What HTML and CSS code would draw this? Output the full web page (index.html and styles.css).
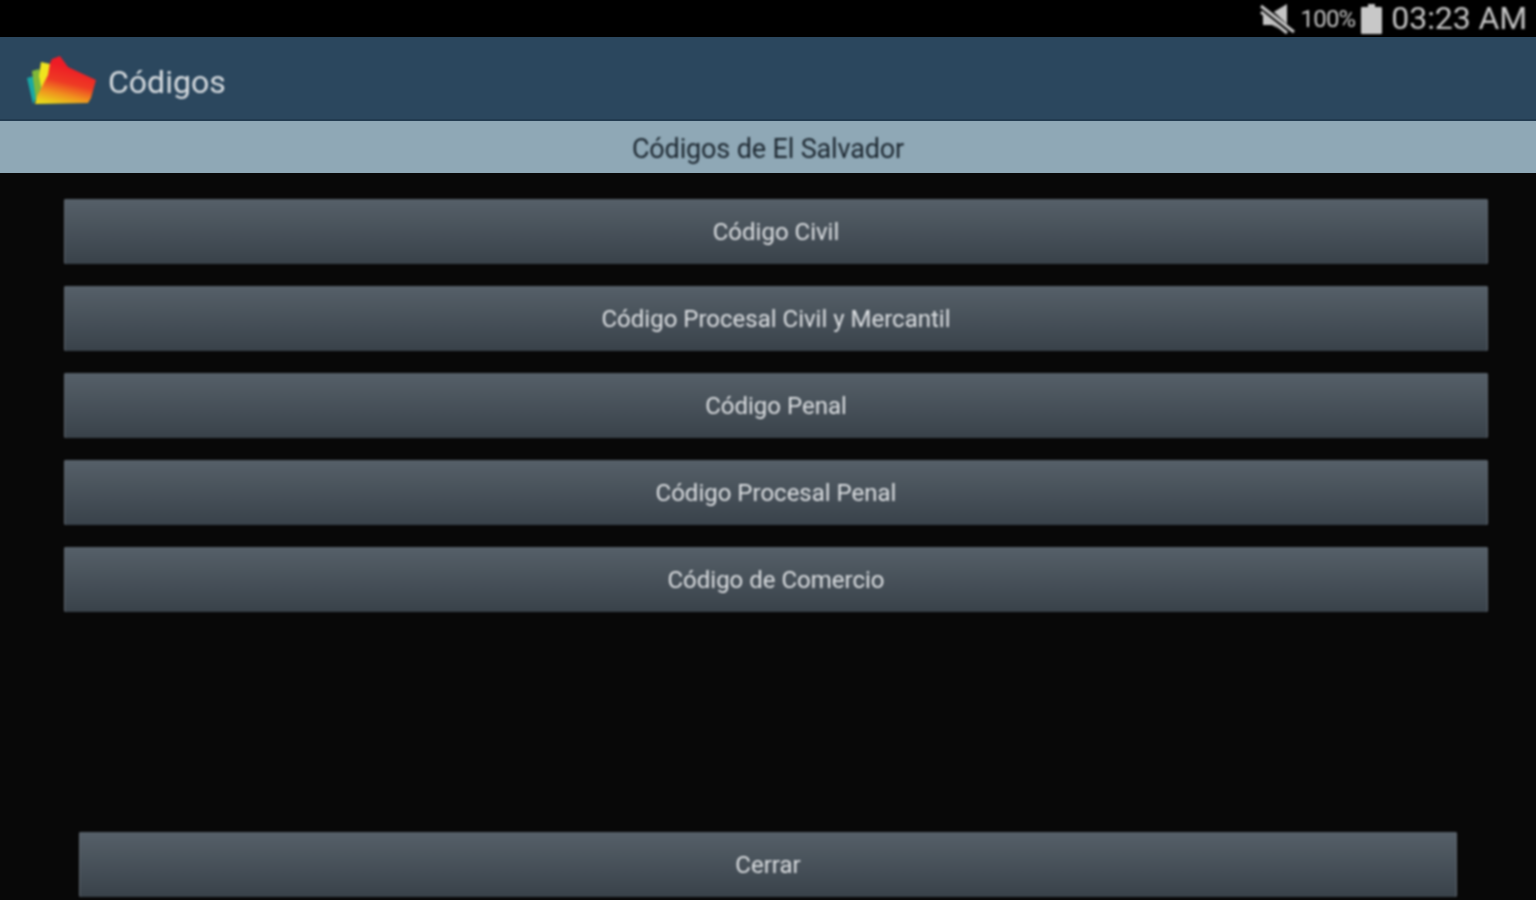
FILE: index.html
```html
<!DOCTYPE html>
<html lang="es">
<head>
    <meta charset="UTF-8">
    <title>Códigos</title>
    <link rel="stylesheet" href="styles.css">
</head>
<body>
<div class="screen">
    <div class="status-bar">
        <svg class="mute-icon soft" width="36" height="34" viewBox="0 0 36 34">
            <path d="M3 11h9L27 2v29L12 23H3z" fill="#c4c4c4"/>
            <path d="M3 6l28 26" stroke="#000" stroke-width="9" fill="none"/>
            <path d="M1 4l33 26M1 10l26 21" stroke="#c4c4c4" stroke-width="3" fill="none"/>
        </svg>
        <span class="battery-text soft">100%</span>
        <span class="battery soft"></span>
        <span class="clock soft">03:23 AM</span>
    </div>
    <div class="app-bar">
        <svg class="logo soft" width="70" height="52" viewBox="0 0 70 52">
            <defs>
                <linearGradient id="logo-fill" x1="0.25" y1="1" x2="0.5" y2="0.2">
                    <stop offset="0" stop-color="#e8d81a"/>
                    <stop offset="0.3" stop-color="#f0901e"/>
                    <stop offset="0.6" stop-color="#ee3a24"/>
                    <stop offset="1" stop-color="#ee1c26"/>
                </linearGradient>
            </defs>
            <path d="M0 24l7-2 5 18-6 10z" fill="#18a8a4"/>
            <path d="M5 17l7-2 6 20-9 12z" fill="#7fb83a"/>
            <path d="M14 8l9 2 2 14-9 18-4-20z" fill="#f0e41e"/>
            <path d="M23 9l2-4 8-3 8 11 28 13-5 18-3 5-53 1 2-8 11-21z" fill="url(#logo-fill)"/>
        </svg>
        <span class="app-title soft">Códigos</span>
    </div>
    <div class="sub-bar"><span class="sub-title soft">Códigos de El Salvador</span></div>
    <div class="content">
        <div class="code-list">
            <button class="btn soft">Código Civil</button>
            <button class="btn soft">Código Procesal Civil y Mercantil</button>
            <button class="btn soft">Código Penal</button>
            <button class="btn soft">Código Procesal Penal</button>
            <button class="btn soft">Código de Comercio</button>
        </div>
        <button class="btn btn-close soft">Cerrar</button>
    </div>
</div>
</body>
</html>
```

FILE: styles.css
```css
html, body {
    margin: 0;
    height: 100%;
    background: #080808;
    overflow: hidden;
}

.screen {
    display: flex;
    flex-direction: column;
    height: 900px;
    font-family: Roboto, "Liberation Sans", sans-serif;
}

/* the reference is an upscaled capture, everything in it is a bit soft */
.soft {
    filter: blur(0.8px);
}

.status-bar {
    height: 37px;
    background: #000;
    display: flex;
    align-items: center;
    justify-content: flex-end;
    padding-right: 9px;
    color: #c4c4c4;
}

.mute-icon {
    margin-right: 5px;
}

.battery-text {
    font-size: 24px;
    letter-spacing: -0.8px;
    margin-right: 6px;
}

.battery {
    position: relative;
    width: 21px;
    height: 27px;
    margin: 3px 9px 0 0;
    background: #c8c8c8;
    border-radius: 1px;
}

.battery::before {
    content: "";
    position: absolute;
    left: 7px;
    top: -3px;
    width: 7px;
    height: 3px;
    background: #c8c8c8;
}

.clock {
    font-size: 32px;
    letter-spacing: -0.1px;
    line-height: 35px;
}

.app-bar {
    height: 84px;
    background: #2b475e;
    border-bottom: 2px solid #223b50;
    display: flex;
    align-items: center;
    padding: 3px 0 0 27px;
    box-sizing: border-box;
}

.logo {
    margin-right: 11px;
}

.app-title {
    font-size: 32px;
    color: #d8dde1;
    padding-top: 4px;
}

.sub-bar {
    height: 52px;
    background: #8fa8b6;
    display: flex;
    align-items: center;
    justify-content: center;
    padding-top: 4px;
    box-sizing: border-box;
    font-size: 27px;
    color: #1c2730;
}

.sub-title {
    letter-spacing: -0.15px;
}

.content {
    flex: 1;
    display: flex;
    flex-direction: column;
    justify-content: space-between;
    padding: 26px 0 3px;
}

.code-list {
    display: flex;
    flex-direction: column;
    gap: 22px;
    margin: 0 48px 0 64px;
}

.btn {
    height: 65px;
    border: 0;
    border-radius: 2px;
    padding: 0;
    background: linear-gradient(#566069, #39424a);
    box-shadow: inset 1px 0 #626971, inset -1px 0 #626971;
    color: #dcdfe2;
    font-family: inherit;
    font-size: 24px;
}

.btn-close {
    margin: 0 79px;
}
```
